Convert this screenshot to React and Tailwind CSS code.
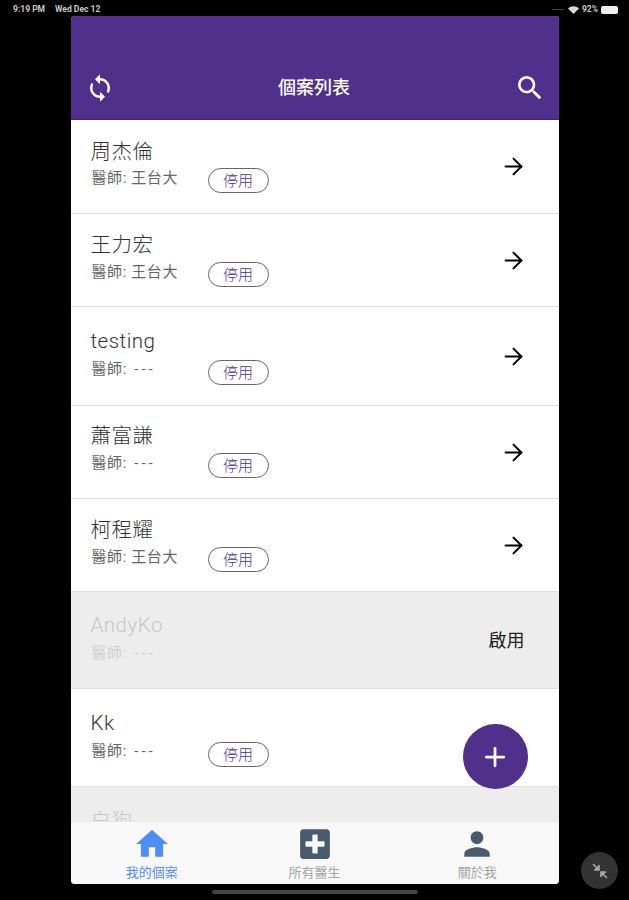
import { ArrowRight, Plus } from "lucide-react"
import { MdSync, MdSearch, MdHome, MdPerson } from "react-icons/md"
import { FaPlusSquare } from "react-icons/fa"

const PATIENTS = [
  { name: "周杰倫", doctor: "王台大", height: "h-[94px]", top: "pt-[19px]", gap: "mt-[3px]" },
  { name: "王力宏", doctor: "王台大", height: "h-[93px]", top: "pt-[18px]", gap: "mt-1" },
  { name: "testing", doctor: "---", height: "h-[99px]", top: "pt-[21px]", gap: "mt-[5px]", badge: "mt-px" },
  { name: "蕭富謙", doctor: "---", height: "h-[93px]", top: "pt-[17px]", gap: "mt-1" },
  { name: "柯程耀", doctor: "王台大", height: "h-[93px]", top: "pt-[18px]", gap: "mt-1" },
  { name: "AndyKo", doctor: "---", height: "h-[97px]", top: "pt-[20px]", gap: "mt-[5px]", disabled: true },
  { name: "Kk", doctor: "---", height: "h-[98px]", top: "pt-[21px]", gap: "mt-[5px]", badge: "mt-px", noArrow: true },
  { name: "白狗", height: "h-[98px]", top: "pt-[21px]", gap: "mt-[5px]", disabled: true },
]

function PatientRow({ patient }) {
  const { name, doctor, height, top, gap, badge, disabled, noArrow } = patient

  return (
    <div
      className={`flex shrink-0 items-center justify-between border-b border-[#dedede] pl-5 ${height} ${
        disabled ? "bg-[#ededed]" : "bg-white"
      }`}
    >
      <div className={`h-full self-start ${top}`}>
        <div
          className={`text-[20.5px] font-light leading-[26px] tracking-[0.5px] ${
            disabled ? "text-[#c8c8c8]" : "text-[#333333]"
          }`}
        >
          {name}
        </div>
        {doctor && (
          <div className={`flex ${gap}`}>
            <div
              className={`w-[117px] pl-px text-[15px] leading-5 tracking-[0.6px] ${
                disabled ? "text-[#d0d0d0]" : "text-[#666666]"
              }`}
            >
              醫師: {doctor === "---" ? <span className="pl-[3px] tracking-[3px]">---</span> : doctor}
            </div>
            {!disabled && (
              <div
                className={`flex h-[25px] w-[61px] items-center justify-center rounded-full border border-[#666666] pt-px text-[15px] font-light text-[#51308c] ${
                  badge || ""
                }`}
              >
                停用
              </div>
            )}
          </div>
        )}
      </div>

      {disabled && doctor && <div className="pr-[34px] text-[18px] text-[#222222]">啟用</div>}
      {!disabled && !noArrow && (
        <div className="pr-[32px] text-black">
          <ArrowRight size={27} strokeWidth={1.8} />
        </div>
      )}
    </div>
  )
}

function TabItem({ icon, label, active }) {
  return (
    <div className="flex flex-1 flex-col items-center">
      <div className="flex h-[36px] items-center justify-center">{icon}</div>
      <div className={`mt-[2px] text-[13px] leading-[18px] ${active ? "text-[#4f8ef7]" : "text-[#a5a5a5]"}`}>
        {label}
      </div>
    </div>
  )
}

export default function App() {
  return (
    <div
      className="relative flex h-[900px] w-[629px] flex-col items-center overflow-hidden bg-black"
      style={{ fontFamily: 'Roboto, "Noto Sans CJK TC", sans-serif' }}
    >
      {/* STATUS BAR */}
      <div className="flex h-4 w-full shrink-0 items-center justify-between pl-[13px] pr-[11px] pt-[3px] text-[8.5px] font-bold text-[#c8c8c8]">
        <div className="flex gap-[10px]">
          <span>9:19 PM</span>
          <span>Wed Dec 12</span>
        </div>
        <div className="flex items-center gap-[3px]">
          <div className="mr-[1px] h-px w-[12px] bg-[#444444]" />
          <svg width="11" height="8" viewBox="0 0 11 8">
            <path d="M0 2.5 C3 -0.5 8 -0.5 11 2.5 L5.5 8 Z" fill="#d8d8d8" />
          </svg>
          <span>92%</span>
          <div className="h-[8px] w-[17px] rounded-[2px] bg-[#eeeeee]" />
        </div>
      </div>

      {/* CARD */}
      <div className="relative flex h-[868px] w-[488px] shrink-0 flex-col overflow-hidden rounded-[4px] bg-white">
        {/* HEADER */}
        <div className="flex h-[104px] shrink-0 items-end justify-between border-b border-[#3f1f85] bg-[#51308c] pb-[15px] pl-[14px] pr-[13px] text-white">
          <MdSync size={30} className="mb-[1px]" />
          <div className="pb-[4px] text-[18px] font-medium leading-6">個案列表</div>
          <MdSearch size={32} />
        </div>

        {/* LIST */}
        <div className="flex min-h-0 flex-1 flex-col overflow-hidden">
          {PATIENTS.map((patient) => (
            <PatientRow key={patient.name} patient={patient} />
          ))}
        </div>

        {/* TAB BAR */}
        <div className="flex h-[63px] shrink-0 border-t border-[#e6e6e6] bg-[#f8f8f8] pt-[4px]">
          <TabItem active label="我的個案" icon={<MdHome size={38} className="text-[#4f8ef7]" />} />
          <TabItem label="所有醫生" icon={<FaPlusSquare size={34} className="text-[#4a5a6e]" />} />
          <TabItem label="關於我" icon={<MdPerson size={38} className="text-[#4a5a6e]" />} />
        </div>

        {/* ADD BUTTON */}
        <div className="absolute left-[392px] top-[708px] flex h-[65px] w-[65px] items-center justify-center rounded-full bg-[#51308c] text-white">
          <Plus size={30} strokeWidth={2.2} />
        </div>
      </div>

      {/* HOME INDICATOR */}
      <div className="mt-[6px] h-1 w-[206px] shrink-0 rounded-full bg-[#444444]" />

      {/* EXIT FULLSCREEN */}
      <div className="absolute left-[581px] top-[852px] flex h-[37px] w-[37px] items-center justify-center rounded-full bg-[#333333]">
        <svg width="20" height="20" viewBox="0 0 20 20" fill="none" stroke="#a8a8a8" strokeWidth="1.6">
          <path d="M3 3 L8.5 8.5" />
          <path d="M9 4 V9 H4" fill="#a8a8a8" />
          <path d="M17 17 L11.5 11.5" />
          <path d="M11 16 V11 H16" fill="#a8a8a8" />
        </svg>
      </div>
    </div>
  )
}
